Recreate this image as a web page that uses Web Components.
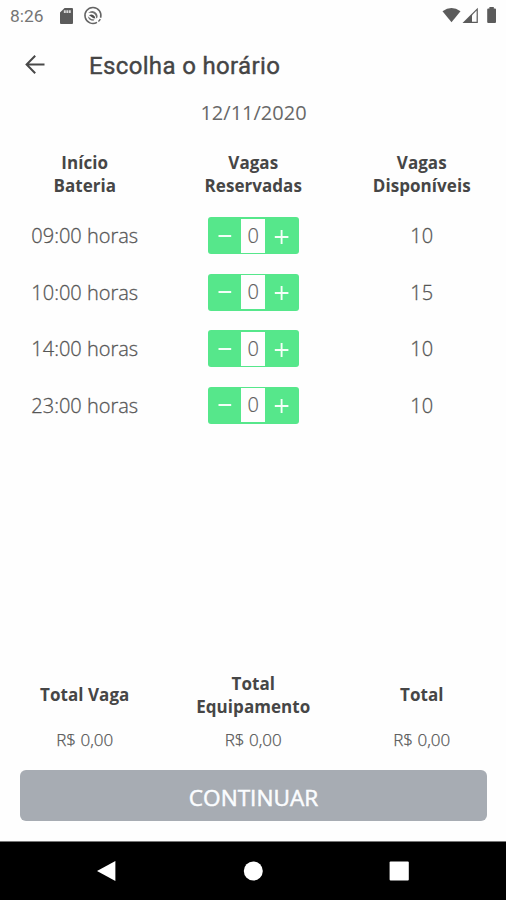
<!DOCTYPE html>
<html lang="pt-BR">
<head>
<meta charset="utf-8">
<title>Escolha o horário</title>
<style>
html,body{margin:0;height:100%;background:#fefefe}
body{overflow:hidden;font-family:"Open Sans","Noto Sans",sans-serif;color:#5c5c5c}
</style>
</head>
<body>
<booking-screen></booking-screen>
<script>
const define = (name, html, setup) => customElements.define(name, class extends HTMLElement {
  constructor() {
    super();
    this.attachShadow({ mode: 'open' });
    const t = document.createElement('template');
    t.innerHTML = html;
    this.shadowRoot.append(t.content.cloneNode(true));
    if (setup) setup.call(this, this.shadowRoot);
  }
});

define('status-bar', `
<style>
:host{display:flex;height:32px;box-sizing:border-box;padding:0 8px 0 10px;align-items:center;justify-content:space-between;font:17.4px/32px Roboto,sans-serif;color:#757575}
div{display:flex;align-items:center;height:32px}
svg{display:block}
.sd{margin-left:16px}.sync{margin-left:10.5px}
</style>
<div><span>8:26</span>
<svg class="sd" width="13" height="16" viewBox="0 0 13 16"><path d="M4.6 0H12Q13 0 13 1V15Q13 16 12 16H1Q0 16 0 15V4.6Z" fill="#5b5b5b"/><path d="M4.8 2.3V5M7.3 2.3V5M9.8 2.3V5" stroke="#d8d8d8" stroke-width="1.9"/></svg>
<svg class="sync" width="20" height="20" viewBox="0 0 20 20"><path d="M14 16.4A8 8 0 1 1 17.6 11.8" fill="none" stroke="#646464" stroke-width="1.5"/><path d="M17.3 13.2A8 8 0 0 1 15.4 15.5" fill="none" stroke="#646464" stroke-width="1.5"/><path d="M5.2 6.9Q8 4.2 11.2 5.4Q14.8 6.9 14.6 11.2L13.2 12.4Q13 8.4 9.6 7.1Q7.3 6.4 5.2 6.9Z" fill="#707070"/><path d="M4.8 10.3Q5.8 14.8 10.4 14.8L11.6 13.6Q7.9 13.7 4.8 10.3Z" fill="#707070"/><path d="M6 9.2Q9.4 7.2 11.7 10.4L12.4 12.4L10.4 12.3Z" fill="#4c4c4c"/></svg>
</div>
<svg width="56" height="18" viewBox="0 0 56 18"><path d="M.5 4.3Q9.5-2.5 18.5 4.3L9.5 15.2Z" fill="#5b5b5b"/><path d="M20.5 16L35.8 .7V16Z" fill="#5b5b5b"/><path d="M30 8.2L34.6 3.5V14.7H30Z" fill="#fefefe"/><path d="M47.4.1H51.8V1.5H53Q54 1.5 54 2.5V15Q54 16 53 16H46.2Q45.2 16 45.2 15V2.5Q45.2 1.5 46.2 1.5H47.4Z" fill="#5b5b5b"/></svg>
`);

define('app-header', `
<style>
:host{display:flex;height:66px;align-items:center;padding-left:25px;font:400 24px/66px Roboto,sans-serif;color:#454545}
svg{display:block;margin-right:44px}
h1{margin:1px 0 -1px;font:inherit;letter-spacing:.35px;-webkit-text-stroke:.4px #454545}
</style>
<svg width="20" height="20" viewBox="0 0 20 20" fill="none" stroke="#484848" stroke-width="2"><path d="M19.5 9.5H2M10.2 .7L1.6 9.5L10.2 18.3"/></svg>
<h1><slot></slot></h1>`);

define('three-columns', `
<style>
:host{display:grid;grid-template-columns:repeat(3,1fr);align-items:center;justify-items:center;text-align:center;height:var(--row-height,56.5px);padding-left:.5px}
</style><slot></slot>`);

define('seat-stepper', `
<style>
:host{display:flex;width:90.5px;height:37px;border-radius:3px;background:#56e78b;align-items:stretch;overflow:hidden;-webkit-text-stroke:.2px #606060}
button{flex:1;border:0;padding:0;background:none;display:grid;place-items:center}
output{width:24px;margin:1.5px 0;background:#fefefe;font:300 20px/33px "Open Sans",sans-serif;text-align:center;color:#606060}
svg{display:block}
</style>
<button aria-label="Diminuir"><svg width="18" height="18" viewBox="0 0 18 18"><path d="M2.5 9H15.2" stroke="#f4fff8" stroke-width="1.9"/></svg></button>
<output>0</output>
<button aria-label="Aumentar"><svg width="18" height="18" viewBox="0 0 18 18"><path d="M1.8 10H15.4M8.6 3V17" stroke="#f4fff8" stroke-width="1.9"/></svg></button>
`, function (root) {
  const out = root.querySelector('output');
  const [less, more] = root.querySelectorAll('button');
  less.onclick = () => out.value = Math.max(0, +out.value - 1);
  more.onclick = () => out.value = +out.value + 1;
});

define('continue-button', `
<style>
:host{display:block;margin:0 19px 0 20px}
button{display:block;width:100%;height:51px;border:0;border-radius:6px;background:#a7acb3;color:#fbfdff;font:400 22.6px/51px "Open Sans",sans-serif;-webkit-text-stroke:.5px #fbfdff;padding:2px 0 0}
</style><button><slot></slot></button>`);

define('navigation-bar', `
<style>
:host{display:grid;grid-template-columns:repeat(3,146px);justify-content:center;justify-items:center;align-items:center;height:59px;background:#000;border-top:1px solid #777;box-sizing:border-box}
svg{display:block}
</style>
<svg width="20" height="22" viewBox="0 0 20 22"><path d="M0 11L18.4 1V21Z" fill="#fff"/></svg>
<svg width="20" height="20" viewBox="0 0 20 20"><circle cx="10.3" cy="10" r="9.5" fill="#fff"/></svg>
<svg width="20" height="20" viewBox="0 0 20 20"><rect x=".6" y=".4" width="19.2" height="19.2" rx="1" fill="#fff"/></svg>`);

define('booking-screen', `
<style>
:host{display:flex;flex-direction:column;height:900px;width:506px}
.date{height:30px;font-size:20px;line-height:29px;text-align:center;padding-left:1px;color:#686868}
.titles{--row-height:48px;margin-top:22px;font-size:17px;line-height:23.5px;font-weight:700;color:#464646;letter-spacing:.05px}
.slots{margin-top:9.5px;font-size:20px;font-weight:300;color:#565656;-webkit-text-stroke:.3px #565656}
.totals{margin-top:auto}
.totals .titles{margin-top:0}
.sums{--row-height:30px;margin-top:5px;font-size:17px;font-weight:300;color:#565656;-webkit-text-stroke:.25px #565656}
continue-button{margin-top:16px}
navigation-bar{margin-top:20px}
</style>
<status-bar></status-bar>
<app-header>Escolha o horário</app-header>
<div class="date">12/11/2020</div>
<three-columns class="titles"><span>Início<br>Bateria</span><span>Vagas<br>Reservadas</span><span>Vagas<br>Disponíveis</span></three-columns>
<div class="slots">
<three-columns><span>09:00 horas</span><seat-stepper></seat-stepper><span>10</span></three-columns>
<three-columns><span>10:00 horas</span><seat-stepper></seat-stepper><span>15</span></three-columns>
<three-columns><span>14:00 horas</span><seat-stepper></seat-stepper><span>10</span></three-columns>
<three-columns><span>23:00 horas</span><seat-stepper></seat-stepper><span>10</span></three-columns>
</div>
<div class="totals">
<three-columns class="titles"><span>Total Vaga</span><span>Total<br>Equipamento</span><span>Total</span></three-columns>
<three-columns class="sums"><span>R$ 0,00</span><span>R$ 0,00</span><span>R$ 0,00</span></three-columns>
</div>
<continue-button>CONTINUAR</continue-button>
<navigation-bar></navigation-bar>`);
</script>
</body>
</html>
